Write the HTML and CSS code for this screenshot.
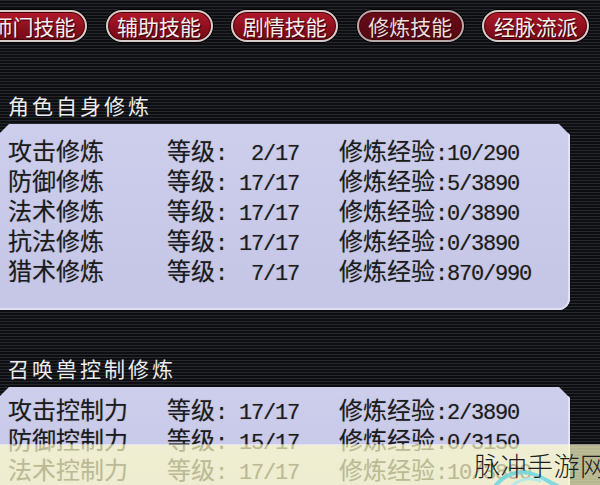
FILE: index.html
```html
<!DOCTYPE html>
<html lang="zh-CN">

<head>
  <meta charset="UTF-8">
  <meta name="viewport" content="width=device-width, initial-scale=1.0">
  <title>修炼技能</title>
  <link rel="stylesheet" href="styles.css">
</head>

<body class="skill-window">
  <div class="tab-bar">
    <div class="tab">师门技能</div>
    <div class="tab">辅助技能</div>
    <div class="tab">剧情技能</div>
    <div class="tab tab-active">修炼技能</div>
    <div class="tab">经脉流派</div>
  </div>

  <h2 class="section-title title-self">角色自身修炼</h2>
  <div class="panel panel-self">
    <div class="row"><span>攻击修炼</span><span>等级<span class="num">:  2/17</span></span><span>修炼经验<span class="num">:10/290</span></span></div>
    <div class="row"><span>防御修炼</span><span>等级<span class="num">: 17/17</span></span><span>修炼经验<span class="num">:5/3890</span></span></div>
    <div class="row"><span>法术修炼</span><span>等级<span class="num">: 17/17</span></span><span>修炼经验<span class="num">:0/3890</span></span></div>
    <div class="row"><span>抗法修炼</span><span>等级<span class="num">: 17/17</span></span><span>修炼经验<span class="num">:0/3890</span></span></div>
    <div class="row"><span>猎术修炼</span><span>等级<span class="num">:  7/17</span></span><span>修炼经验<span class="num">:870/990</span></span></div>
  </div>

  <h2 class="section-title title-pet">召唤兽控制修炼</h2>
  <div class="panel panel-pet">
    <div class="row"><span>攻击控制力</span><span>等级<span class="num">: 17/17</span></span><span>修炼经验<span class="num">:2/3890</span></span></div>
    <div class="row"><span>防御控制力</span><span>等级<span class="num">: 15/17</span></span><span>修炼经验<span class="num">:0/3150</span></span></div>
    <div class="row"><span>法术控制力</span><span>等级<span class="num">: 17/17</span></span><span>修炼经验<span class="num">:10/3890</span></span></div>
  </div>

  <!-- site stamp laid over the bottom edge -->
  <div class="stamp-band">
    <svg class="stamp-swirl" width="70" height="24" viewBox="0 0 70 24">
      <path d="M4 22 C 14 10, 30 6, 44 12 C 52 15, 58 20, 66 23" fill="none" stroke="#6fd6e0" stroke-width="4" stroke-linecap="round" opacity="0.85"/>
      <path d="M20 23 C 28 16, 38 14, 48 18" fill="none" stroke="#a8e8ee" stroke-width="3" stroke-linecap="round" opacity="0.8"/>
    </svg>
    <span class="stamp-text">脉冲手游网</span>
  </div>
</body>

</html>
```

FILE: styles.css
```css
html,
body {
  margin: 0;
  padding: 0;
}

.skill-window {
  position: relative;
  width: 600px;
  height: 485px;
  overflow: hidden;
  /* scanline backdrop */
  background: repeating-linear-gradient(to bottom, #26282e 0, #26282e 1px, #0d0e12 1px, #0d0e12 3px);
  font-family: "Noto Sans CJK SC", sans-serif;
}

/*Tab row across the top*/
.tab-bar {
  display: flex;
  gap: 18.6px;
  margin-left: -20px;
  padding-top: 10px;
}

.tab {
  flex: 0 0 auto;
  box-sizing: border-box;
  width: 107px;
  height: 32px;
  display: flex;
  align-items: center;
  justify-content: center;
  border-radius: 16px;
  border: 2px solid #d6cccc;
  background: linear-gradient(to bottom, #b01a2a, #8a0e1c 60%, #760a16);
  box-shadow: 0 0 0 1px #050505, inset 0 0 0 1px #4c0008;
  color: #f6eeee;
  font-size: 21px;
  line-height: 1;
  text-shadow: 1px 1px 0 #3a0006;
}

.tab-active {
  background: linear-gradient(to bottom, #6a0c18, #520812);
  border-color: #b8aaaa;
  color: #eadcdc;
}

/*Section headings*/
.section-title {
  margin: 0;
  padding-left: 8px;
  font-size: 21px;
  font-weight: normal;
  letter-spacing: 3px;
  line-height: 30px;
  color: #ececec;
}

.title-self {
  margin-top: 48px;
}

.title-pet {
  margin-top: 43px;
}

/*Lavender info panels*/
.panel {
  width: 570px;
  box-sizing: border-box;
  padding-left: 8px;
  background: linear-gradient(to bottom, #cdcdec, #c5c5e6);
  border-bottom-right-radius: 12px;
  box-shadow: inset -2px 0 0 #e2e2f4, inset 0 -2px 0 #dedef0;
  clip-path: polygon(0 9px, 9px 0, calc(100% - 11px) 0, 100% 11px, 100% 100%, 0 100%);
  color: #1c1c1c;
}

.panel-self {
  margin-top: 4px;
  padding-top: 11px;
  padding-bottom: 25px;
}

.panel-pet {
  margin-top: 4px;
  padding-top: 7px;
  height: 120px;
}

.row {
  display: grid;
  grid-template-columns: 159px 172px auto;
  height: 30px;
  line-height: 30px;
  font-size: 24px;
  white-space: pre;
  text-shadow: 0 0 1px rgba(0, 0, 0, 0.35);
}

/* half-width digits, 12px per cell */
.num {
  font-family: "Liberation Mono", monospace;
  font-size: 22px;
  letter-spacing: -1.2px;
}

/*Watermark strip*/
.stamp-band {
  position: absolute;
  left: 0;
  top: 445px;
  width: 600px;
  height: 40px;
  background: rgba(255, 254, 200, 0.7);
  box-shadow: 0 -1px 0 rgba(255, 255, 255, 0.5);
}

.stamp-swirl {
  position: absolute;
  left: 492px;
  top: 18px;
}

.stamp-text {
  position: absolute;
  left: 474px;
  top: 4px;
  font-size: 26px;
  font-weight: 300;
  line-height: 32px;
  letter-spacing: 0.5px;
  color: #1e1e1e;
  white-space: nowrap;
}
```
